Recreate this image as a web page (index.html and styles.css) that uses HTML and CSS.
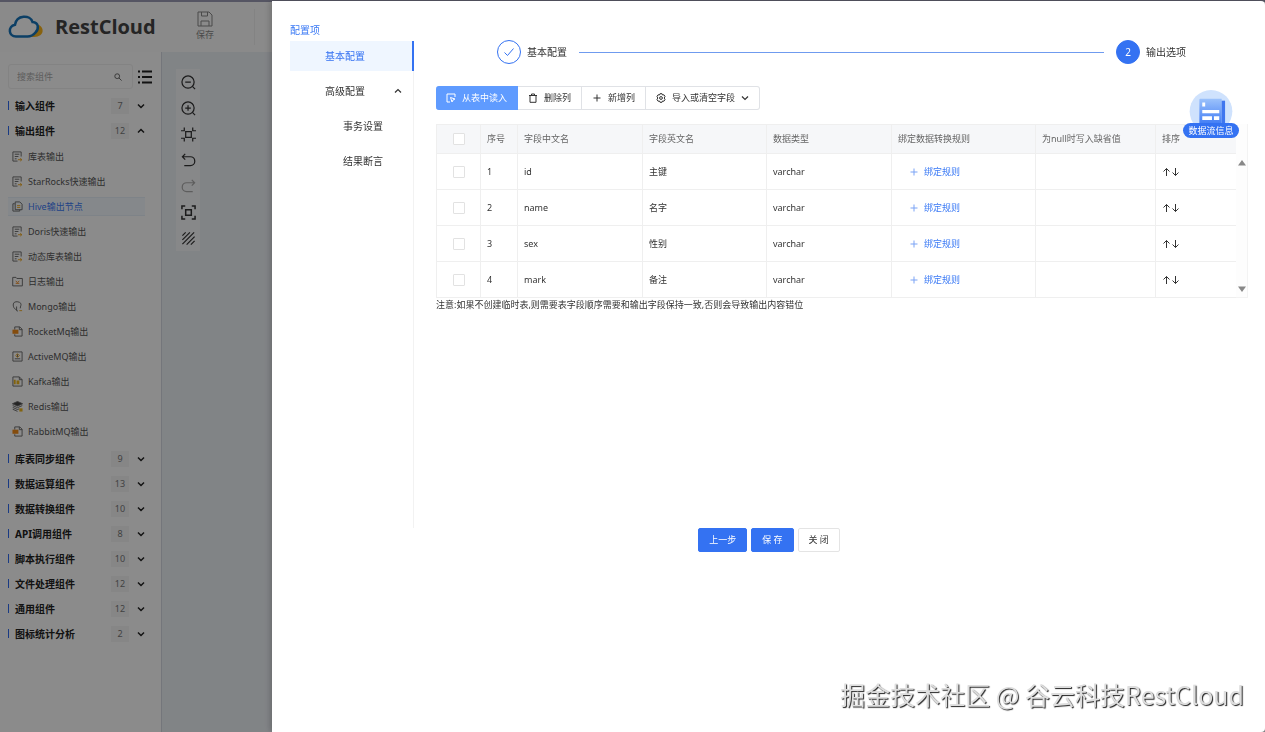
FILE: index.html
```html
<!DOCTYPE html>
<html lang="zh-CN">
<head>
<meta charset="utf-8">
<title>RestCloud</title>
<link rel="stylesheet" href="styles.css">
</head>
<body>
<svg class="defs" aria-hidden="true">
  <symbol id="down" viewBox="0 0 8 8"><path d="M1 2.500 4 5.500 7 2.500"/></symbol>
  <symbol id="up" viewBox="0 0 8 8"><path d="M1 5.500 4 2.500 7 5.500"/></symbol>
  <symbol id="plus" viewBox="0 0 10 10"><path d="M5 1.500v7M1.500 5h7"/></symbol>
  <symbol id="sheet" viewBox="0 0 12 12"><path d="M10 6V1H1v10h5M3 3.500h5M3 6h4M3 8.500h2"/><path class="amber" d="M6.500 9.500h4M9 8l1.800 1.500L9 11"/></symbol>
  <symbol id="copy" viewBox="0 0 12 12"><path d="M3 3H1v8h7.500V9.500"/><path d="M3.500 1h5L11 3.500v6H3.500z"/><path class="amber" d="M5.500 5h3.500M5.500 7h3.500"/></symbol>
  <symbol id="folder" viewBox="0 0 12 12"><path d="M.8 10.800V1.500h3.500l1 1.200h6v8.100z"/><path class="orange" d="M4 5.500l2 1.500 2-1.500M4 8h4"/></symbol>
  <symbol id="mongo" viewBox="0 0 12 12"><path d="M5 9.500C1 8.500.5 3 2.500 1.500s6-.5 7 1S9 6 9 8M5 6v4.500l1.500.5"/><path class="amber" d="M8 10.500h3"/></symbol>
  <symbol id="rocket" viewBox="0 0 12 12"><path d="M3 4V1h5.500L11 3.500V11H3V9"/><path class="orangefill" d="M.5 4H7v4.500H.5z"/><path d="M8 1v3h3"/></symbol>
  <symbol id="active" viewBox="0 0 12 12"><path d="M1 1h10v10H1zM3 8.500h6M6 6.500v-3"/><path class="amber" d="M4 5l2-2 2 2-2 2z"/></symbol>
  <symbol id="kafka" viewBox="0 0 12 12"><path d="M1 11V1h7l3 3v7zM8 1v3h3"/><path class="amberfill" d="M2 4h2v5H2zM5 5h3v4H5z"/></symbol>
  <symbol id="redis" viewBox="0 0 12 12"><path class="darkfill" d="M6 .5 11.500 3 6 5.500.5 3z"/><path d="M.8 5 6 7.300 11.200 5M.8 7 6 9.300 8 8.500M.8 9 6 11.300"/><path class="amberfill" d="M8 8h3.500v3.500H8z"/></symbol>
</svg>

<div class="app">
  <header class="topbar">
    <div class="brand">
      <svg class="logo" viewBox="0 0 36 24"><path class="sun" d="M27 9c5 0 8.500 4 7.500 8-1.200 4-5.500 5.500-13 5 5-2.500 7-6.500 5.500-13z"/><path class="cloud" d="M8 21.500C.5 21.500-.5 11.500 7 9.800 8.500-.5 22.500-.5 24.500 7c6.500.5 6.500 7 3 10.500-2.500 3-5 4-8 4z"/></svg>
      <span class="brand-name">RestCloud</span>
    </div>
    <button class="save-tool" type="button">
      <svg class="icon-16" viewBox="0 0 16 16"><path d="M1 1h11l3 3v11H1zM4.500 1v4h6V1M4 15v-5h8v5"/></svg>
      <span>保存</span>
    </button>
    <span class="topbar-rule"></span>
  </header>
  <div class="workspace">
    <aside class="sidebar">
      <div class="search-row">
        <label class="search"><input type="text" placeholder="搜索组件" aria-label="搜索组件"><svg class="icon-8" viewBox="0 0 10 10"><circle cx="4" cy="4" r="3"/><path d="M6.200 6.200 9.500 9.500"/></svg></label>
        <button class="list-toggle" type="button" aria-label="列表"><svg class="icon-16" viewBox="0 0 16 16"><path d="M5 2.500h10M5 8h10M5 13.500h10M1 2.500h2M1 8h2M1 13.500h2"/></svg></button>
      </div>
      <button class="group" type="button"><span class="group-name">输入组件</span><span class="count">7</span><svg class="icon-8"><use href="#down"/></svg></button>
      <button class="group" type="button"><span class="group-name">输出组件</span><span class="count">12</span><svg class="icon-8"><use href="#up"/></svg></button>
      <ul class="items">
        <li class="item"><svg><use href="#sheet"/></svg>库表输出</li>
        <li class="item"><svg><use href="#sheet"/></svg>StarRocks快速输出</li>
        <li class="item active"><svg><use href="#copy"/></svg>Hive输出节点</li>
        <li class="item"><svg><use href="#sheet"/></svg>Doris快速输出</li>
        <li class="item"><svg><use href="#sheet"/></svg>动态库表输出</li>
        <li class="item"><svg><use href="#folder"/></svg>日志输出</li>
        <li class="item"><svg><use href="#mongo"/></svg>Mongo输出</li>
        <li class="item"><svg><use href="#rocket"/></svg>RocketMq输出</li>
        <li class="item"><svg><use href="#active"/></svg>ActiveMQ输出</li>
        <li class="item"><svg><use href="#kafka"/></svg>Kafka输出</li>
        <li class="item"><svg><use href="#redis"/></svg>Redis输出</li>
        <li class="item"><svg><use href="#rocket"/></svg>RabbitMQ输出</li>
      </ul>
      <button class="group" type="button"><span class="group-name">库表同步组件</span><span class="count">9</span><svg class="icon-8"><use href="#down"/></svg></button>
      <button class="group" type="button"><span class="group-name">数据运算组件</span><span class="count">13</span><svg class="icon-8"><use href="#down"/></svg></button>
      <button class="group" type="button"><span class="group-name">数据转换组件</span><span class="count">10</span><svg class="icon-8"><use href="#down"/></svg></button>
      <button class="group" type="button"><span class="group-name">API调用组件</span><span class="count">8</span><svg class="icon-8"><use href="#down"/></svg></button>
      <button class="group" type="button"><span class="group-name">脚本执行组件</span><span class="count">10</span><svg class="icon-8"><use href="#down"/></svg></button>
      <button class="group" type="button"><span class="group-name">文件处理组件</span><span class="count">12</span><svg class="icon-8"><use href="#down"/></svg></button>
      <button class="group" type="button"><span class="group-name">通用组件</span><span class="count">12</span><svg class="icon-8"><use href="#down"/></svg></button>
      <button class="group" type="button"><span class="group-name">图标统计分析</span><span class="count">2</span><svg class="icon-8"><use href="#down"/></svg></button>
    </aside>
    <main class="canvas">
      <div class="tools">
        <button type="button" aria-label="缩小"><svg viewBox="0 0 16 16"><circle cx="7.500" cy="7.500" r="6.500"/><path d="M4.500 7.500h6M12.200 12.200 15 15"/></svg></button>
        <button type="button" aria-label="放大"><svg viewBox="0 0 16 16"><circle cx="7.500" cy="7.500" r="6.500"/><path d="M4.500 7.500h6M7.500 4.500v6M12.200 12.200 15 15"/></svg></button>
        <button type="button" aria-label="实际大小"><svg viewBox="0 0 16 16"><path d="M5 5h6v6H5zM0 4h3.500V.5M12.500.5V4H16M0 12h3.500v3.500M12.500 15.500V12H16"/></svg></button>
        <button type="button" aria-label="撤销"><svg viewBox="0 0 16 16"><path d="M4.500 1 1.500 4l3 3M1.500 4H10a4.700 4.700 0 0 1 0 9.400H3.500"/></svg></button>
        <button class="faded" type="button" aria-label="重做"><svg viewBox="0 0 16 16"><path d="m11.500 1 3 3-3 3M14.500 4H6a4.700 4.700 0 0 0 0 9.400h6.500"/></svg></button>
        <button type="button" aria-label="适应画布"><svg class="heavy" viewBox="0 0 16 16"><path d="M5 5h6v6H5zM1 4.500V1h3.500M11.500 1H15v3.500M1 11.500V15h3.500M11.500 15H15v-3.500"/></svg></button>
        <button type="button" aria-label="网格"><svg viewBox="0 0 16 16"><path d="M1.500 5 5 1.500M1.500 9.500l8-8M1.500 14 14 1.500M6 14.500 14.500 6M10.500 14.500l4-4"/></svg></button>
      </div>
    </main>
  </div>
</div>

<div class="mask"></div>

<section class="drawer" role="dialog" aria-label="配置项">
  <div class="drawer-body">
    <nav class="config">
      <h2 class="config-title">配置项</h2>
      <ul class="menu">
        <li><button class="menu-item selected" type="button">基本配置</button></li>
        <li><button class="menu-item" type="button">高级配置<svg class="icon-8"><use href="#up"/></svg></button></li>
        <li><button class="menu-item sub" type="button">事务设置</button></li>
        <li><button class="menu-item sub" type="button">结果断言</button></li>
      </ul>
    </nav>
    <div class="content">
      <ol class="steps">
        <li class="step"><span class="dot done"><svg viewBox="0 0 12 12"><path d="M1.500 6.500 4.500 9.500 10.500 2.500"/></svg></span>基本配置</li>
        <li class="step-line" aria-hidden="true"></li>
        <li class="step"><span class="dot">2</span>输出选项</li>
      </ol>
      <div class="actions">
        <button class="action primary" type="button"><svg viewBox="0 0 10 10"><path d="M9 4V1H1v8h3M4.500 4.500 9 6 7 7l-1 2z"/></svg>从表中读入</button>
        <button class="action" type="button"><svg viewBox="0 0 10 10"><path d="M1 2.500h8M3.500 2.500V1h3v1.500M2 2.500V9.300h6V2.500"/></svg>删除列</button>
        <button class="action" type="button"><svg><use href="#plus"/></svg>新增列</button>
        <button class="action" type="button"><svg viewBox="0 0 10 10"><path d="M4 .7h2l.5 1.300 1.500-.2 1 1.700L8.200 5 9 6.500 8 8.200 6.500 8 6 9.300H4L3.500 8 2 8.200 1 6.500 1.800 5 1 3.500 2 1.800 3.500 2z"/><circle cx="5" cy="5" r="1.400"/></svg>导入或清空字段<svg class="icon-8"><use href="#down"/></svg></button>
      </div>
      <div class="grid">
        <table class="fields">
          <colgroup><col class="c-check"><col class="c-no"><col class="c-name"><col class="c-type"><col class="c-name"><col class="c-rule"><col class="c-null"><col></colgroup>
          <thead>
            <tr><th class="check"><input type="checkbox" aria-label="全选"></th><th>序号</th><th>字段中文名</th><th>字段英文名</th><th>数据类型</th><th>绑定数据转换规则</th><th>为null时写入缺省值</th><th>排序</th></tr>
          </thead>
          <tbody>
            <tr><td class="check"><input type="checkbox" aria-label="选择 id"></td><td>1</td><td>id</td><td>主键</td><td>varchar</td><td><button class="bind" type="button"><svg><use href="#plus"/></svg>绑定规则</button></td><td></td><td><svg class="sort" viewBox="0 0 18 10"><path d="M4.500 9V1.500M1.500 4.500l3-3 3 3M13.500 1v7.500M10.500 5.500l3 3 3-3"/></svg></td></tr>
            <tr><td class="check"><input type="checkbox" aria-label="选择 name"></td><td>2</td><td>name</td><td>名字</td><td>varchar</td><td><button class="bind" type="button"><svg><use href="#plus"/></svg>绑定规则</button></td><td></td><td><svg class="sort" viewBox="0 0 18 10"><path d="M4.500 9V1.500M1.500 4.500l3-3 3 3M13.500 1v7.500M10.500 5.500l3 3 3-3"/></svg></td></tr>
            <tr><td class="check"><input type="checkbox" aria-label="选择 sex"></td><td>3</td><td>sex</td><td>性别</td><td>varchar</td><td><button class="bind" type="button"><svg><use href="#plus"/></svg>绑定规则</button></td><td></td><td><svg class="sort" viewBox="0 0 18 10"><path d="M4.500 9V1.500M1.500 4.500l3-3 3 3M13.500 1v7.500M10.500 5.500l3 3 3-3"/></svg></td></tr>
            <tr><td class="check"><input type="checkbox" aria-label="选择 mark"></td><td>4</td><td>mark</td><td>备注</td><td>varchar</td><td><button class="bind" type="button"><svg><use href="#plus"/></svg>绑定规则</button></td><td></td><td><svg class="sort" viewBox="0 0 18 10"><path d="M4.500 9V1.500M1.500 4.500l3-3 3 3M13.500 1v7.500M10.500 5.500l3 3 3-3"/></svg></td></tr>
          </tbody>
        </table>
        <div class="scrollbar"><svg viewBox="0 0 8 6"><path d="M4 0 8 5.500H0z"/></svg><svg viewBox="0 0 8 6"><path d="M0 .5h8L4 6z"/></svg></div>
        <button class="flow-info" type="button">
          <svg viewBox="0 0 44 34"><defs><linearGradient id="g" x1="0" y1="0" x2="0" y2="1"><stop offset="0" stop-color="#9cc2fb"/><stop offset="1" stop-color="#4680f5"/></linearGradient></defs><circle cx="22" cy="22" r="22" fill="#cfe2fd"/><path d="M10 10q0-1 1-1h22v25H10z" fill="url(#g)"/><path d="M33 11h3.500v23H33z" fill="#3f76ef"/><path d="M13 13h3v4h-3zM13 20.500h17.500v3.500H13zM13 27h10v4H13zM25 27h5.500v4H25z" fill="#fff"/></svg>
          <span>数据流信息</span>
        </button>
      </div>
      <p class="note">注意:如果不创建临时表,则需要表字段顺序需要和输出字段保持一致,否则会导致输出内容错位</p>
    </div>
  </div>
  <footer class="buttons">
    <button class="btn solid" type="button">上一步</button>
    <button class="btn solid" type="button">保 存</button>
    <button class="btn" type="button">关 闭</button>
  </footer>
</section>
<div class="watermark">掘金技术社区 @ 谷云科技RestCloud</div>
</body>
</html>
```
FILE: styles.css
```css
* { box-sizing: border-box; }
body {
  margin: 0;
  background: #fff;
  color: #333;
  font: 9px/16px "Noto Sans", "Noto Sans CJK SC", sans-serif;
}
button, input { font: inherit; color: inherit; }
button { padding: 0; border: 0; background: none; cursor: pointer; }
ul, ol { margin: 0; padding: 0; list-style: none; }
svg { flex: none; fill: none; stroke: currentColor; stroke-width: 1; }
.defs { display: none; }
.icon-8 { width: 8px; height: 8px; stroke-width: 1.2; }
.icon-16 { width: 16px; height: 16px; }

/* page behind the drawer */
.app { display: flex; flex-direction: column; height: 100vh; border-top: 2px solid #9c9cb4; }
.topbar { display: flex; align-items: center; height: 50px; background: #fcfcfc; }
.brand { display: flex; align-items: center; gap: 11px; width: 189px; padding-left: 8px; }
.logo { width: 36px; height: 24px; stroke: none; }
.cloud { fill: #fff; stroke: #1673b9; stroke-width: 2.5; }
.sun { fill: #f6b21c; }
.brand-name { color: #444; font: 700 20px/28px "Open Sans", "Noto Sans", sans-serif; }
.save-tool { display: flex; flex-direction: column; align-items: center; width: 32px; color: #888; }
.topbar-rule { width: 1px; height: 36px; margin-left: 33px; background: #eee; }
.workspace { display: flex; flex: 1; min-height: 0; }
.sidebar { width: 162px; padding: 12px 8px; background: #fdfdfd; border-right: 1px solid #d4d8e0; }
.search-row { display: flex; align-items: center; gap: 4px; height: 25px; margin-bottom: 4px; }
.search { display: flex; align-items: center; width: 125px; height: 25px; padding: 0 10px 0 8px; border: 1px solid #eee; border-radius: 3px; }
.search input { flex: 1; min-width: 0; padding: 0; border: 0; outline: 0; background: none; }
.search input::placeholder { color: #aaa; }
.search .icon-8 { stroke: #666; }
.list-toggle { display: flex; color: #222; }
.list-toggle .icon-16 { stroke-width: 2; }
.group { display: flex; align-items: center; width: 100%; height: 25px; padding-right: 8px; color: #222; }
.group::before { content: ""; width: 1px; height: 9px; margin-right: 6px; background: #2f6bf0; }
.group-name { flex: 1; text-align: left; font-size: 10px; font-weight: 700; }
.count { width: 18px; margin-right: 8px; background: #f4f4f5; color: #777; text-align: center; }
.group .icon-8 { stroke-width: 1.500; }
.items { padding-top: 1px; margin-bottom: 2px; }
.item { display: flex; align-items: center; gap: 5px; height: 25px; padding-left: 4px; color: #555; }
.item svg { width: 11px; height: 11px; color: #666; }
.item.active { height: 19px; margin: 3px 8px 3px 0; background: #f3f8fd; border: solid #e6eef8; border-width: 1px 0; color: #3b78f5; }
.amber { stroke: #eda51a; }
.orange { stroke: #f08519; }
.amberfill { fill: #edb51a; stroke: none; }
.orangefill { fill: #f08a19; stroke: none; }
.darkfill { fill: #444; }
.canvas { flex: 1; padding: 17px 14px; background: #ecf0f5; }
.tools { display: flex; flex-direction: column; width: 24px; background: #f6f7f9; color: #333; }
.tools button { display: grid; place-items: center; height: 26px; }
.tools svg { width: 15px; height: 15px; stroke-width: 1.300; }
.tools .heavy { stroke-width: 1.600; }
.tools .faded { color: #aaa; }

.mask { position: fixed; inset: 0; background: rgba(0, 0, 0, 0.45); }

/* drawer */
.drawer {
  position: fixed;
  inset: 1px 0 0 272px;
  padding: 0 17px 0 18px;
  background: #fff;
  border-radius: 0 4px 4px 0;
  box-shadow: -2px 0 6px rgba(0, 0, 0, 0.2);
}
.drawer-body { display: flex; gap: 22px; }
.config { display: flex; flex-direction: column; width: 124px; padding-top: 21px; }
.config-title { margin: 0; color: #3b7af5; font-size: 10px; font-weight: 400; line-height: 16px; }
.menu { height: 487px; margin-top: 3px; border-right: 1px solid #f2f2f2; }
.menu li { height: 35px; }
.menu-item { display: flex; align-items: center; justify-content: space-between; width: 124px; height: 30px; padding: 0 12px 0 35px; font-size: 10px; }
.menu-item.sub { padding-left: 53px; }
.menu-item.selected { background: #eff6ff; border-right: 2px solid #3472f2; color: #3472f2; }
.content { flex: 1; min-width: 0; padding-top: 39px; }
.steps { display: flex; align-items: center; padding: 0 62px 0 61px; font-size: 10px; }
.step { display: flex; align-items: center; gap: 6px; }
.dot { display: grid; place-items: center; width: 24px; height: 24px; border: 1px solid #3472f2; border-radius: 50%; background: #3472f2; color: #fff; }
.dot.done { background: #fff; color: #3472f2; }
.dot svg { width: 12px; height: 12px; }
.step-line { flex: 1; height: 1px; margin: 0 12px; background: #6f9bef; }
.actions { display: flex; margin-top: 22px; }
.action { display: flex; align-items: center; gap: 6px; height: 24px; padding: 0 10px; border: 1px solid #e0e2e6; border-left-width: 0; }
.action svg { width: 10px; height: 10px; }
.action .icon-8 { width: 8px; height: 8px; }
.action:last-child { border-radius: 0 3px 3px 0; }
.action.primary { border-color: #5f9bff; border-radius: 3px 0 0 3px; background: #5f9bff; color: #fff; }
.grid { position: relative; display: flex; margin-top: 14px; }
.fields { flex: 1; width: 0; table-layout: fixed; border-collapse: collapse; }
.c-check { width: 44px; }
.c-no { width: 37px; }
.c-name { width: 125px; }
.c-type { width: 124px; }
.c-rule { width: 144px; }
.c-null { width: 120px; }
.fields th, .fields td { padding: 0 6px; border: 1px solid #efefef; border-right-width: 0; text-align: left; font-weight: 400; white-space: nowrap; }
.fields th { height: 29px; background: #f6f7f9; color: #666; }
.fields td { height: 36px; }
.fields .check { text-align: center; }
.fields input { display: block; width: 12px; height: 12px; margin: 0 auto; appearance: none; border: 1px solid #e2e2e2; border-radius: 1px; background: #fff; }
.bind { display: flex; align-items: center; gap: 5px; padding-left: 11px; color: #3b7af5; }
.bind svg { width: 10px; height: 10px; stroke: #7ba3f5; }
.sort { display: block; width: 18px; height: 10px; }
.scrollbar { display: flex; flex-direction: column; justify-content: space-between; align-items: center; width: 12px; padding: 36px 0 5px; border: solid #f3f3f3; border-width: 0 1px 1px 0; background: #fdfdfd; }
.scrollbar svg { width: 8px; height: 6px; fill: #888; stroke: none; }
.flow-info { position: absolute; right: 9px; top: -34px; display: flex; flex-direction: column; align-items: center; width: 56px; color: #fff; }
.flow-info svg { width: 44px; height: 33px; stroke: none; }
.flow-info span { width: 56px; height: 15px; line-height: 15px; border-radius: 8px; background: #3472f2; }
.note { margin: 0; line-height: 14px; }
.buttons { display: flex; justify-content: center; gap: 4px; }
.btn { height: 24px; padding: 0 10px; border: 1px solid #e4e4e4; border-radius: 2px; background: #fff; }
.btn.solid { border-color: #3472f2; background: #3472f2; color: #fff; }

.watermark {
  position: fixed;
  right: 21px;
  bottom: 20px;
  color: #dedede;
  font: 25px/36px "Noto Sans CJK SC", sans-serif;
  text-shadow: 1px 1px 1px #222;
}
```
